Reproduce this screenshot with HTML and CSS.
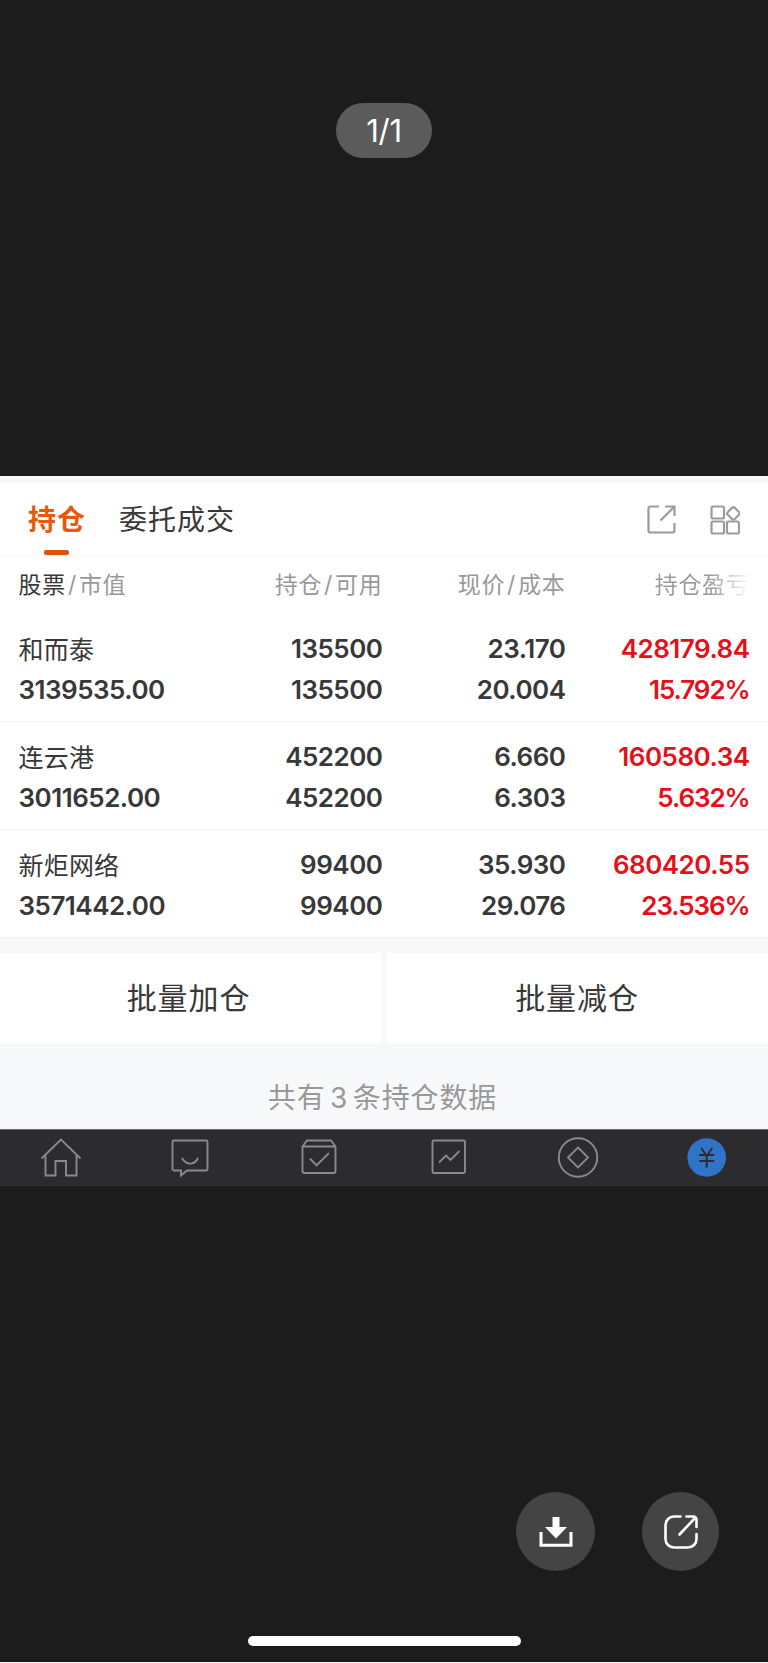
FILE: index.html
```
<!DOCTYPE html>
<html lang="zh-CN">
<head>
  <meta charset="UTF-8">
  <meta name="viewport" content="width=device-width, initial-scale=1.0">
  <title>持仓</title>
  <link rel="stylesheet" href="styles.css">
</head>
<body>
  <div class="viewer">
    <div class="viewer-top">
      <span class="counter">1/1</span>
    </div>

    <div class="photo">
      <div class="tabs">
        <span class="tab active">持仓</span>
        <span class="tab">委托成交</span>
        <div class="tab-icons">
          <svg width="30" height="30" viewBox="0 0 30 30">
            <path d="M12 1.500H3.500a2 2 0 0 0-2 2V25.500a2 2 0 0 0 2 2H25.500a2 2 0 0 0 2-2V18M18 1.500H27.500V11M27 2L13.500 15.500"/>
          </svg>
          <svg width="30" height="30" viewBox="0 0 30 30">
            <rect x="1.500" y="1.500" width="12.500" height="12" rx="1.500"/>
            <rect x="1.500" y="16.500" width="12.500" height="12" rx="1.500"/>
            <rect x="17" y="16.500" width="12" height="12" rx="1.500"/>
            <rect x="18.500" y="3.500" width="9.800" height="9.800" rx="2" transform="rotate(45 23.400 8.400)"/>
          </svg>
        </div>
      </div>

      <div class="row head">
        <span><b>股票</b><i>/</i>市值</span>
        <span>持仓<i>/</i>可用</span>
        <span>现价<i>/</i>成本</span>
        <span class="fade">持仓盈亏</span>
      </div>

      <div class="row stock">
        <div><p class="name">和而泰</p><p>3139535.00</p></div>
        <div><p>135500</p><p>135500</p></div>
        <div><p>23.170</p><p>20.004</p></div>
        <div class="up"><p>428179.84</p><p class="rate">15.792%</p></div>
      </div>
      <div class="row stock">
        <div><p class="name">连云港</p><p>3011652.00</p></div>
        <div><p>452200</p><p>452200</p></div>
        <div><p>6.660</p><p>6.303</p></div>
        <div class="up"><p>160580.34</p><p class="rate">5.632%</p></div>
      </div>
      <div class="row stock">
        <div><p class="name">新炬网络</p><p>3571442.00</p></div>
        <div><p>99400</p><p>99400</p></div>
        <div><p>35.930</p><p>29.076</p></div>
        <div class="up"><p>680420.55</p><p class="rate">23.536%</p></div>
      </div>

      <div class="batch">
        <span class="add">批量加仓</span>
        <span>批量减仓</span>
      </div>
      <div class="total">共有<em>3</em>条持仓数据</div>

      <div class="nav">
        <svg width="42" height="42" viewBox="0 0 42 42">
          <path d="M1.500 21.500L21 2.500L40.500 21.500M5.500 18V38.500H15.500V24H26V38.500H36.500V18"/>
        </svg>
        <svg width="42" height="42" viewBox="0 0 42 42">
          <path d="M5 3.500H37a1.500 1.500 0 0 1 1.500 1.500V32a1.500 1.500 0 0 1-1.500 1.500H18L12 38.500V33.500H5A1.500 1.500 0 0 1 3.500 32V5A1.500 1.500 0 0 1 5 3.500zM13 21c4 7.500 12.500 7.500 16 0"/>
        </svg>
        <svg width="42" height="42" viewBox="0 0 42 42">
          <path d="M4.500 9.500L9 3.500H33L37.500 9.500V34a2 2 0 0 1-2 2H6.500a2 2 0 0 1-2-2zM4.500 9.500H37.500M12 21.500L18.500 28.500L31 16"/>
        </svg>
        <svg width="42" height="42" viewBox="0 0 42 42">
          <rect x="4.500" y="3.500" width="32.500" height="32.500" rx="1.500"/>
          <path d="M11 25.500L18 18.500L22.500 23L31.500 14"/>
        </svg>
        <svg width="42" height="42" viewBox="0 0 42 42">
          <circle cx="21" cy="20.500" r="19.200"/>
          <path d="M21 10.500L31 20.500L21 30.500L11 20.500z"/>
        </svg>
        <svg class="money" width="42" height="42" viewBox="0 0 42 42">
          <circle cx="20.700" cy="20.500" r="19.300"/>
          <path d="M15.200 11L20.700 19L26.200 11M20.700 19V30.500M13.200 18H28.200M13.200 24H28.200"/>
        </svg>
      </div>
    </div>

    <div class="actions">
      <span class="action">
        <svg width="34" height="34" viewBox="0 0 34 34">
          <path class="solid" d="M13.500 2H20.500V12H28L17 23.500L6 12H13.500z"/>
          <path d="M2 17V30.300H32V17" stroke-width="3"/>
        </svg>
      </span>
      <span class="action share">
        <svg width="34" height="34" viewBox="0 0 34 34">
          <path d="M16.500 1.500H10A8.500 8.500 0 0 0 1.500 10V24A8.500 8.500 0 0 0 10 32.500H24A8.500 8.500 0 0 0 32.500 24V19M22.500 1.500H29.500a3 3 0 0 1 3 3V12M31 3L15.500 19.500" stroke-width="2.600" stroke-linecap="round"/>
        </svg>
      </span>
    </div>
    <div class="home-bar"></div>
  </div>
</body>
</html>
```
FILE: styles.css
```
* {
  box-sizing: border-box;
}
body {
  margin: 0;
  background: #1c1c1c;
  font-family: Inter, "Noto Sans CJK SC", sans-serif;
  color: #383838;
}
p {
  margin: 0;
}
svg {
  display: block;
  fill: none;
}
.viewer {
  height: 1663px;
  border-bottom: 1px solid #f2f2f2;
}
.viewer-top {
  height: 476px;
  padding-top: 103px;
  text-align: center;
}
.counter {
  display: inline-block;
  width: 96px;
  height: 55px;
  border-radius: 28px;
  background: #5b5b5b;
  color: #fff;
  font-size: 31px;
  line-height: 55px;
  letter-spacing: -0.3px;
}

/* screenshot in the viewer */
.photo {
  background: #fff;
  border-top: 7px solid #f6f8fa;
}
.tabs {
  display: flex;
  height: 73px;
  padding: 0 28px;
  border-bottom: 1px solid #f5f5f6;
  font-size: 28px;
  letter-spacing: 1px;
  line-height: 75px;
}
.tab {
  height: 72px;
  margin-right: 33px;
}
.tab.active {
  position: relative;
  color: #e8590c;
  font-weight: bold;
}
.tab.active::after {
  content: "";
  position: absolute;
  left: 16px;
  bottom: 0;
  width: 25px;
  height: 5px;
  border-radius: 2px;
  background: #e35205;
}
.tab-icons {
  display: flex;
  gap: 33px;
  margin: 22px 0 0 auto;
  stroke: #9c9c9c;
  stroke-width: 2.2;
}
.row {
  display: grid;
  grid-template-columns: 190px 1fr 183px 184px;
  padding: 0 18.5px;
  text-align: right;
}
.row > :first-child {
  text-align: left;
}
.head {
  height: 58px;
  color: #999;
  font-size: 23px;
  line-height: 58px;
  letter-spacing: 0.7px;
}
.head b {
  color: #383838;
  font-weight: normal;
}
.head i {
  margin: 0 2px;
  font-style: normal;
}
.head .fade {
  color: transparent;
  background: linear-gradient(90deg, #999 78%, #fff 100%);
  background-clip: text;
  -webkit-background-clip: text;
}
.stock {
  height: 108px;
  padding-top: 14px;
  border-bottom: 1px solid #f3f4f5;
  font-size: 26px;
  font-weight: 600;
  letter-spacing: -0.5px;
  line-height: 41px;
}
.stock .name {
  height: 41px;
  font-size: 25px;
  font-weight: normal;
  letter-spacing: 0.2px;
  line-height: 44px;
}
.up {
  color: #e60f19;
}
.up .rate {
  letter-spacing: -1.1px;
}
.batch {
  display: grid;
  grid-template-columns: 1fr 1fr;
  gap: 4px;
  height: 105px;
  padding-top: 15px;
  background: #f6f8fa;
}
.batch span {
  background: #fff;
  font-size: 30px;
  letter-spacing: 0.9px;
  line-height: 90px;
  text-align: center;
}
.batch .add {
  padding-right: 5px;
}
.total {
  height: 86px;
  padding-right: 3px;
  background: #f6f8fa;
  color: #999;
  font-size: 28px;
  letter-spacing: 0.9px;
  line-height: 111px;
  text-align: center;
}
.total em {
  margin: 0 4.5px;
  font-style: normal;
}
.nav {
  display: flex;
  justify-content: space-between;
  height: 57px;
  padding: 7px 40px 0;
  border-top: 1px solid #6b6b6d;
  background: #2c2c2e;
  stroke: #8a8a8c;
  stroke-width: 1.9;
}
.money circle {
  fill: #2f74c8;
  stroke: none;
}
.money path {
  stroke: #2c2c2e;
  stroke-width: 2;
}

/* viewer buttons */
.actions {
  display: flex;
  justify-content: flex-end;
  gap: 47px;
  padding: 306px 49px 0 0;
}
.action {
  display: flex;
  align-items: center;
  justify-content: center;
  width: 79px;
  height: 79px;
  border-radius: 50%;
  background: #444;
  stroke: #fff;
}
.action.share {
  width: 77px;
}
.action .solid {
  fill: #fff;
  stroke: none;
}
.home-bar {
  width: 273px;
  height: 10px;
  margin: 65px auto 0;
  border-radius: 5px;
  background: #fff;
}
```
